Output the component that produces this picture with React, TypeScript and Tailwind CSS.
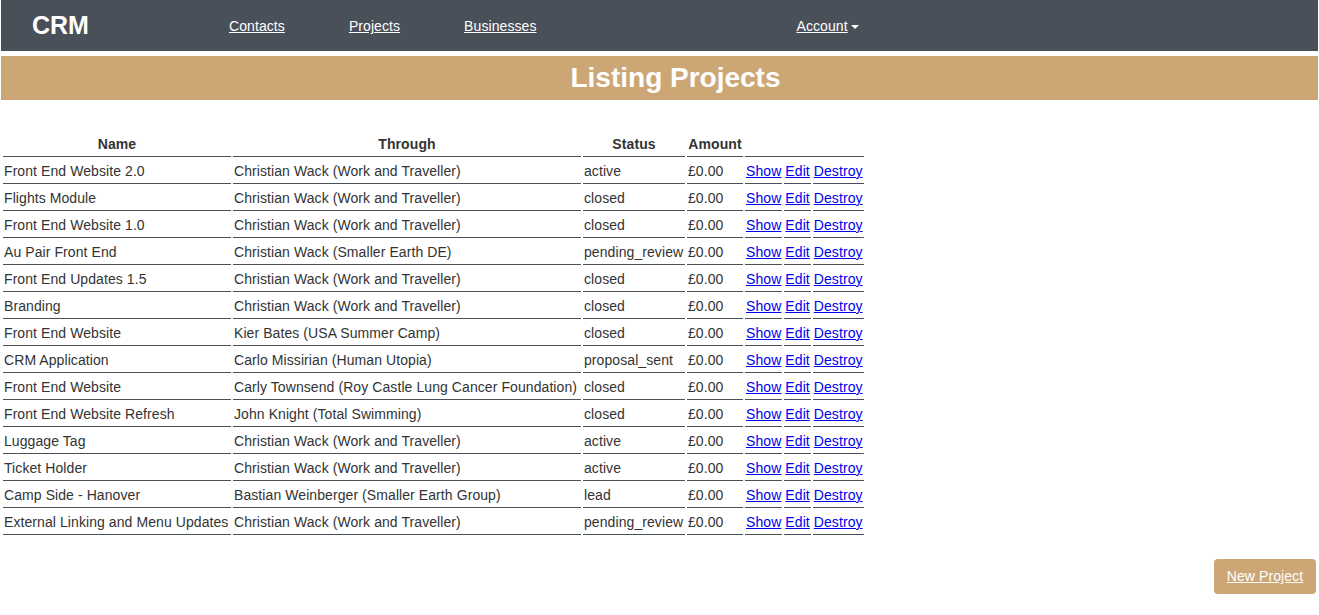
import React from 'react';

const projects = [
    { name: 'Front End Website 2.0', through: 'Christian Wack (Work and Traveller)', status: 'active' },
    { name: 'Flights Module', through: 'Christian Wack (Work and Traveller)', status: 'closed' },
    { name: 'Front End Website 1.0', through: 'Christian Wack (Work and Traveller)', status: 'closed' },
    { name: 'Au Pair Front End', through: 'Christian Wack (Smaller Earth DE)', status: 'pending_review' },
    { name: 'Front End Updates 1.5', through: 'Christian Wack (Work and Traveller)', status: 'closed' },
    { name: 'Branding', through: 'Christian Wack (Work and Traveller)', status: 'closed' },
    { name: 'Front End Website', through: 'Kier Bates (USA Summer Camp)', status: 'closed' },
    { name: 'CRM Application', through: 'Carlo Missirian (Human Utopia)', status: 'proposal_sent' },
    { name: 'Front End Website', through: 'Carly Townsend (Roy Castle Lung Cancer Foundation)', status: 'closed' },
    { name: 'Front End Website Refresh', through: 'John Knight (Total Swimming)', status: 'closed' },
    { name: 'Luggage Tag', through: 'Christian Wack (Work and Traveller)', status: 'active' },
    { name: 'Ticket Holder', through: 'Christian Wack (Work and Traveller)', status: 'active' },
    { name: 'Camp Side - Hanover', through: 'Bastian Weinberger (Smaller Earth Group)', status: 'lead' },
    { name: 'External Linking and Menu Updates', through: 'Christian Wack (Work and Traveller)', status: 'pending_review' },
];

const cell = 'border-b border-[#4a5059] px-px py-[2px] leading-5 whitespace-nowrap';

export default function App() {
    return (
        <div className="min-h-[615px] bg-white text-[14px] tracking-[0.08px] text-[#333] font-['Liberation_Sans',Arial,sans-serif]">
            <nav className="mx-px flex h-[51px] items-center bg-[#4a5059] pt-[2px] text-white">
                <div className="-mt-[3px] w-[228px] pl-[31px] text-[25px] font-bold leading-none tracking-normal">CRM</div>
                <div className="flex gap-[64px]">
                    <a href="#" className="underline">Contacts</a>
                    <a href="#" className="underline">Projects</a>
                    <a href="#" className="underline">Businesses</a>
                </div>
                <div className="ml-[260px] flex items-center">
                    <a href="#" className="underline">Account</a>
                    <span className="ml-[3px] mt-[1px] h-0 w-0 border-x-[4px] border-t-[4px] border-x-transparent border-t-white" />
                </div>
            </nav>

            <div className="mx-px mt-[5px] flex h-[44px] items-center justify-center bg-[#cca775] pl-8">
                <h1 className="text-[28px] font-bold leading-none tracking-normal text-white">Listing Projects</h1>
            </div>

            <table className="ml-px mt-[30px] border-separate border-spacing-[2px]">
                <thead>
                    <tr>
                        <th className={`${cell} w-[228px] text-center font-bold`}>Name</th>
                        <th className={`${cell} w-[348px] text-center font-bold`}>Through</th>
                        <th className={`${cell} w-[102px] text-center font-bold`}>Status</th>
                        <th className={`${cell} w-[56px] text-center font-bold`}>Amount</th>
                        <th className={cell} colSpan={3}></th>
                    </tr>
                </thead>
                <tbody>
                    {projects.map((p, i) => (
                        <tr key={i}>
                            <td className={cell}>{p.name}</td>
                            <td className={cell}>{p.through}</td>
                            <td className={cell}>{p.status}</td>
                            <td className={cell}>£0.00</td>
                            <td className={`${cell} w-[37px]`}><a href="#" className="text-[#0000ee] underline">Show</a></td>
                            <td className={`${cell} w-[26px]`}><a href="#" className="text-[#0000ee] underline">Edit</a></td>
                            <td className={`${cell} w-[51px]`}><a href="#" className="text-[#0000ee] underline">Destroy</a></td>
                        </tr>
                    ))}
                </tbody>
            </table>

            <div className="mt-[22px] flex justify-end pr-[3px]">
                <a href="#" className="flex h-[35px] w-[102px] items-center justify-center rounded bg-[#cca775] text-white underline">
                    New Project
                </a>
            </div>
        </div>
    );
}
